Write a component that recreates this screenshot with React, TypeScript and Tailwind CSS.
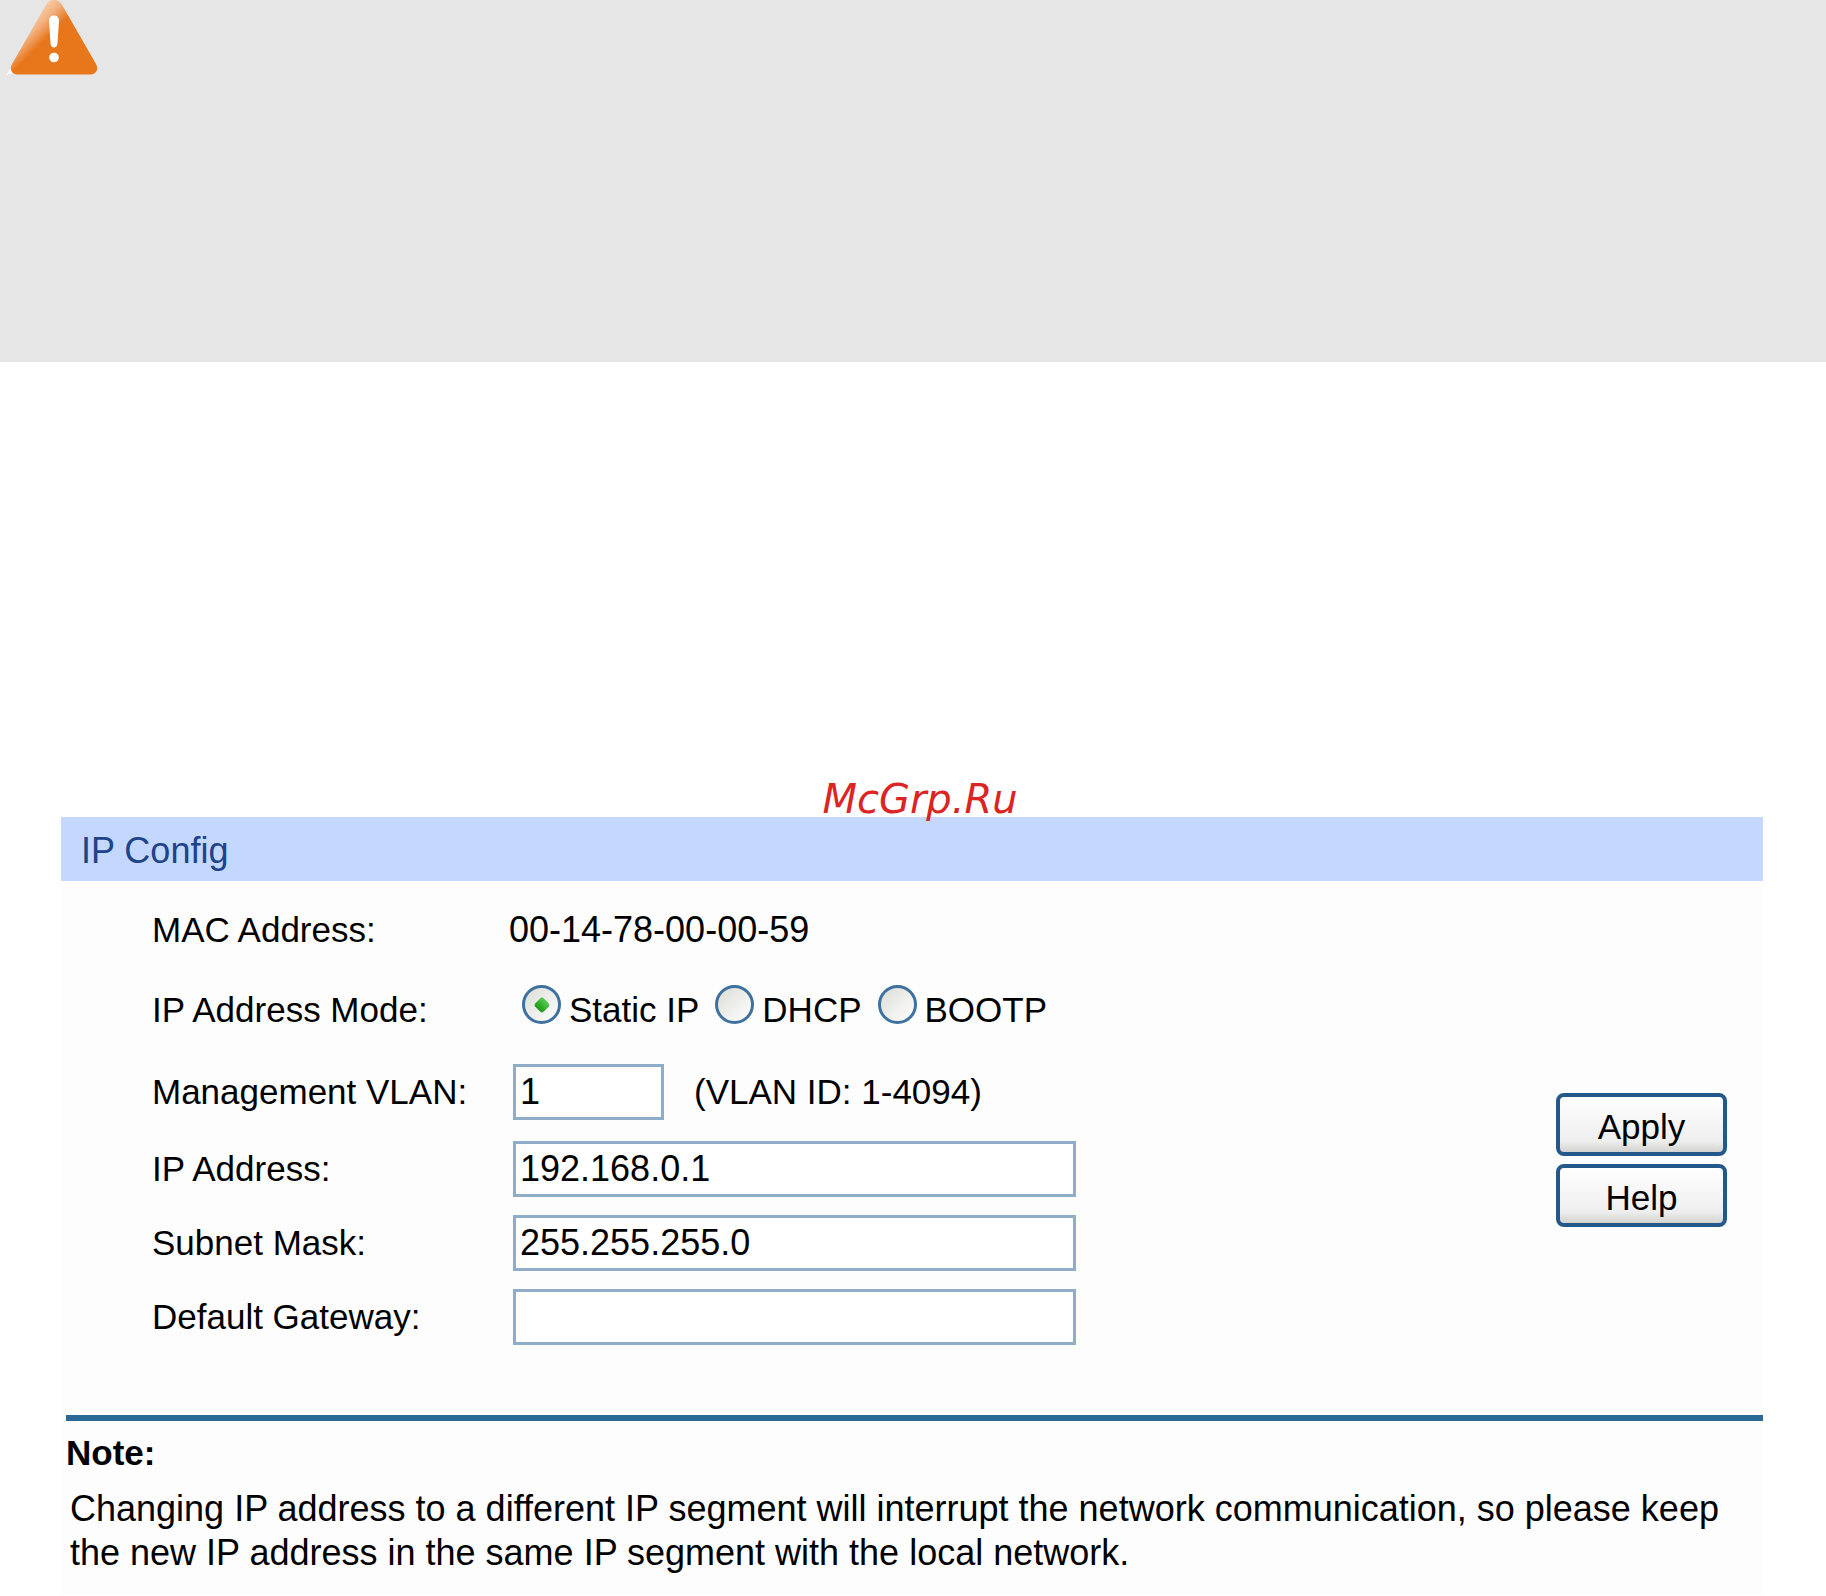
import { useState } from 'react';
import type { ReactNode } from 'react';
import { clsx } from 'clsx';

interface Settings {
  mode: string;
  vlan: string;
  address: string;
  mask: string;
  gateway: string;
}

const MODES = ['Static IP', 'DHCP', 'BOOTP'];

function WarningIcon() {
  return (
    <svg className="w-[98px] h-[76px]" viewBox="0 0 98 76" role="img" aria-label="Warning">
      <defs>
        <linearGradient id="shine" gradientUnits="userSpaceOnUse" x1="28" y1="23" x2="45" y2="40">
          <stop offset="0" stopColor="#f6c9a2" />
          <stop offset="0.4" stopColor="#f2b280" />
          <stop offset="0.8" stopColor="#ea8a3e" />
          <stop offset="1" stopColor="#e8761a" />
        </linearGradient>
      </defs>
      <path d="M6 75 L11 68 L12 73 Z" fill="#fff" />
      <path
        d="M46.5 4 C49.5 -1.5 58.5 -1.5 61.5 4 L96 64 C99 69.500 96 74.500 90 74.500 L18 74.500 C12 74.500 9 69.500 12 64 Z"
        fill="url(#shine)"
      />
      <path
        d="M49 21 C49 17.500 51 15.500 54 15.500 C57 15.500 59 17.500 59 21 L57.500 43 C57.300 46 56 47.500 54 47.500 C52 47.500 50.700 46 50.500 43 Z"
        fill="#fff"
      />
      <circle cx="54" cy="57.500" r="4.800" fill="#fff" />
    </svg>
  );
}

function Row({ label, htmlFor, children, className }: {
  label: string;
  htmlFor?: string;
  children: ReactNode;
  className?: string;
}) {
  return (
    <div className={clsx('flex items-center', className)}>
      {htmlFor ? (
        <label htmlFor={htmlFor} className="w-[357px] shrink-0 text-[35px]">{label}</label>
      ) : (
        <span className="w-[357px] shrink-0 text-[35px]">{label}</span>
      )}
      {children}
    </div>
  );
}

function TextBox({ id, value, onChange, className }: {
  id: string;
  value: string;
  onChange: (value: string) => void;
  className: string;
}) {
  return (
    <input
      id={id}
      type="text"
      value={value}
      onChange={(e) => onChange(e.target.value)}
      className={clsx(
        'ml-1 h-14 min-w-0 border-3 border-[#8fadc8] bg-white pl-1 outline-none',
        className
      )}
    />
  );
}

function PanelButton({ children }: { children: ReactNode }) {
  return (
    <button
      type="button"
      className="h-[63px] w-[171px] rounded-lg border-4 border-[#24588a] bg-linear-to-b from-white via-[#eeeeee] via-80% to-[#d2d2d0] pt-1 text-[35px]"
    >
      {children}
    </button>
  );
}

export default function App() {
  const [settings, setSettings] = useState<Settings>({
    mode: 'Static IP',
    vlan: '1',
    address: '192.168.0.1',
    mask: '255.255.255.0',
    gateway: ''
  });

  const update = (key: keyof Settings) => (value: string) =>
    setSettings(prev => ({ ...prev, [key]: value }));

  return (
    <main className="bg-white font-['Liberation_Sans',Arial,sans-serif] text-[36px] leading-[44px] text-black">
      <div className="min-h-[362px] bg-[#e6e6e6]">
        <WarningIcon />
      </div>

      <section className="relative mt-[455px] mr-[63px] ml-[61px] bg-[#fdfdfd] pb-5">
        <h1 className="flex h-16 items-center bg-[#c4d8ff] pt-1 pl-5 text-[#1f4389]">IP Config</h1>

        {/* Site watermark */}
        <div className="absolute inset-x-0 -top-10 pl-4 text-center font-['DejaVu_Sans',sans-serif] text-[40px] text-[#dc2424] italic">
          McGrp.Ru
        </div>

        <form className="flex items-center justify-between pt-6 pr-9 pl-[91px]">
          <div className="pb-[70px]">
            <Row label="MAC Address:" className="mb-[30px] h-[50px]">
              <span>00-14-78-00-00-59</span>
            </Row>

            <Row label="IP Address Mode:" className="mb-[29px] h-[50px]">
              <div className="ml-[13px] flex gap-4 text-[35px]" role="radiogroup" aria-label="IP Address Mode">
                {MODES.map(mode => (
                  <label key={mode} className="flex h-[50px] items-center gap-2">
                    <input
                      type="radio"
                      name="mode"
                      checked={settings.mode === mode}
                      onChange={() => update('mode')(mode)}
                      className={clsx(
                        'grid size-[39px] shrink-0 appearance-none place-content-center self-start rounded-full',
                        'border-3 border-[#3d719f] bg-linear-to-br from-[#dcdcd6] to-white',
                        'before:size-3 before:rotate-45 before:rounded-[3px] before:bg-linear-to-b before:from-[#55cc50] before:to-[#159a12]',
                        "before:opacity-0 before:content-[''] checked:before:opacity-100"
                      )}
                    />
                    {mode}
                  </label>
                ))}
              </div>
            </Row>

            <Row label="Management VLAN:" htmlFor="vlan" className="mb-[21px]">
              <TextBox id="vlan" value={settings.vlan} onChange={update('vlan')} className="w-[151px]" />
              <span className="ml-[30px] text-[35px]">(VLAN ID: 1-4094)</span>
            </Row>

            <div className="flex flex-col gap-[18px]">
              <Row label="IP Address:" htmlFor="address">
                <TextBox id="address" value={settings.address} onChange={update('address')} className="w-[563px]" />
              </Row>
              <Row label="Subnet Mask:" htmlFor="mask">
                <TextBox id="mask" value={settings.mask} onChange={update('mask')} className="w-[563px]" />
              </Row>
              <Row label="Default Gateway:" htmlFor="gateway">
                <TextBox id="gateway" value={settings.gateway} onChange={update('gateway')} className="w-[563px]" />
              </Row>
            </div>
          </div>

          <div className="flex flex-col gap-2">
            <PanelButton>Apply</PanelButton>
            <PanelButton>Help</PanelButton>
          </div>
        </form>

        <div className="ml-[5px] border-t-6 border-[#2a6896] pt-2.5">
          <h2 className="text-[35px] font-bold">Note:</h2>
          <p className="mt-3 pr-3 pl-1">
            Changing IP address to a different IP segment will interrupt the network communication, so please keep the
            new IP address in the same IP segment with the local network.
          </p>
        </div>
      </section>
    </main>
  );
}
